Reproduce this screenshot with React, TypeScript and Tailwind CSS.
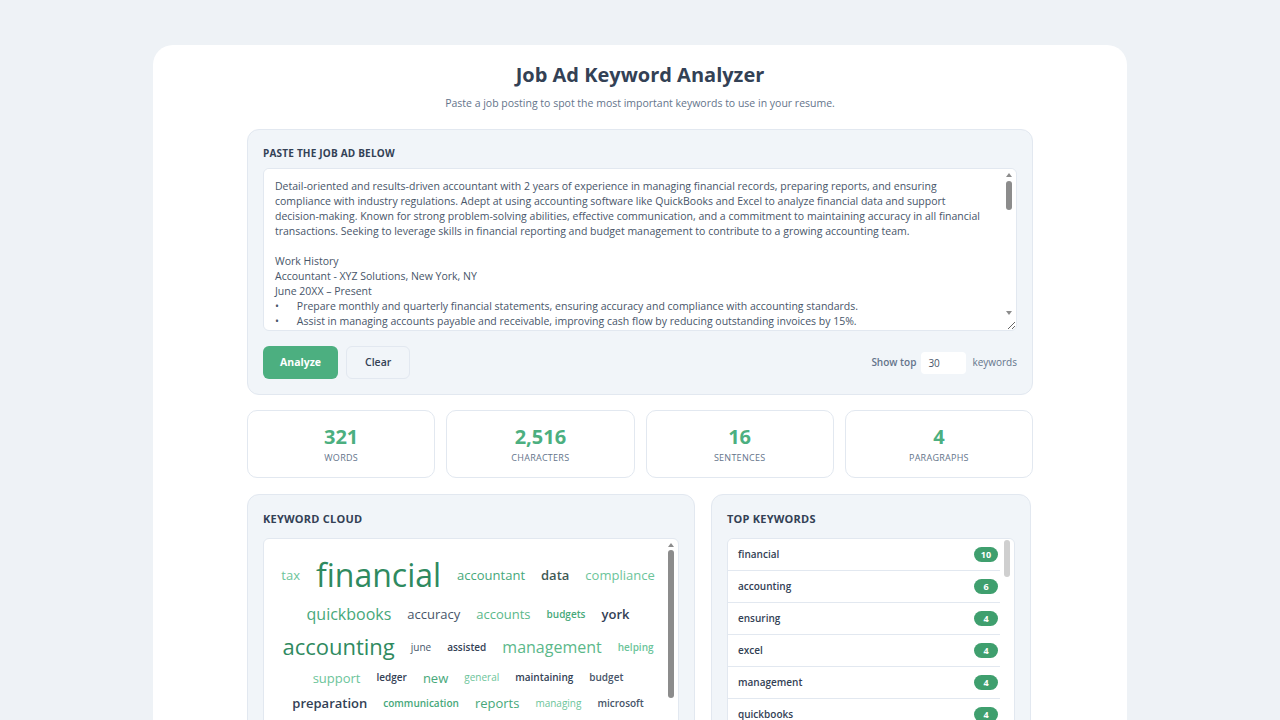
import { useState } from "react";

const SAMPLE = `Detail-oriented and results-driven accountant with 2 years of experience in managing financial records, preparing reports, and ensuring compliance with industry regulations. Adept at using accounting software like QuickBooks and Excel to analyze financial data and support decision-making. Known for strong problem-solving abilities, effective communication, and a commitment to maintaining accuracy in all financial transactions. Seeking to leverage skills in financial reporting and budget management to contribute to a growing accounting team.

Work History
Accountant - XYZ Solutions, New York, NY
June 20XX – Present
•\tPrepare monthly and quarterly financial statements, ensuring accuracy and compliance with accounting standards.
•\tAssist in managing accounts payable and receivable, improving cash flow by reducing outstanding invoices by 15%.
•\tReconcile bank statements and general ledger accounts on a monthly basis.
•\tSupport budget preparation and variance analysis for department heads.`;

type Word = { text: string; cls: string };

// size / weight / tint for every cloud entry
const cloud: Word[] = [
  { text: "tax", cls: "text-[13px] text-[#6cc49a]" },
  { text: "financial", cls: "text-[32px] text-[#2f8a60]" },
  { text: "accountant", cls: "text-[13px] text-[#47a87a]" },
  { text: "data", cls: "text-[13px] font-semibold text-[#3f5a55]" },
  { text: "compliance", cls: "text-[13px] text-[#6cc49a]" },
  { text: "quickbooks", cls: "text-[16px] text-[#47a87a]" },
  { text: "accuracy", cls: "text-[13px] text-[#475569]" },
  { text: "accounts", cls: "text-[13px] text-[#5bb88a]" },
  { text: "budgets", cls: "text-[10px] font-semibold text-[#47a87a]" },
  { text: "york", cls: "text-[13px] font-semibold text-[#334155]" },
  { text: "accounting", cls: "text-[22px] text-[#2f8a60]" },
  { text: "june", cls: "text-[10px] text-[#475569]" },
  { text: "assisted", cls: "text-[10px] font-semibold text-[#334155]" },
  { text: "management", cls: "text-[16px] text-[#5bb88a]" },
  { text: "helping", cls: "text-[10px] font-semibold text-[#6cc49a]" },
  { text: "support", cls: "text-[13px] text-[#6cc49a]" },
  { text: "ledger", cls: "text-[10px] font-semibold text-[#334155]" },
  { text: "new", cls: "text-[13px] text-[#47a87a]" },
  { text: "general", cls: "text-[10px] text-[#6cc49a]" },
  { text: "maintaining", cls: "text-[10px] font-semibold text-[#334155]" },
  { text: "budget", cls: "text-[10px] font-semibold text-[#475569]" },
  { text: "preparation", cls: "text-[13px] font-semibold text-[#334155]" },
  { text: "communication", cls: "text-[10px] font-semibold text-[#47a87a]" },
  { text: "reports", cls: "text-[13px] text-[#47a87a]" },
  { text: "managing", cls: "text-[10px] text-[#6cc49a]" },
  { text: "microsoft", cls: "text-[10px] font-semibold text-[#475569]" },
  { text: "statements", cls: "text-[13px] text-[#47a87a]" },
  { text: "excel", cls: "text-[16px] text-[#2f8a60]" },
  { text: "ensuring", cls: "text-[16px] text-[#47a87a]" },
  { text: "reconciliation", cls: "text-[10px] font-semibold text-[#334155]" },
];

const topKeywords: [string, number][] = [
  ["financial", 10],
  ["accounting", 6],
  ["ensuring", 4],
  ["excel", 4],
  ["management", 4],
  ["quickbooks", 4],
  ["accountant", 3],
  ["compliance", 3],
  ["data", 3],
  ["tax", 3],
  ["accuracy", 2],
  ["accounts", 2],
  ["budgets", 2],
  ["york", 2],
  ["june", 2],
  ["assisted", 2],
  ["helping", 2],
  ["support", 2],
  ["ledger", 2],
  ["new", 2],
  ["general", 2],
  ["maintaining", 2],
  ["budget", 2],
  ["preparation", 2],
  ["communication", 1],
  ["reports", 1],
  ["managing", 1],
  ["microsoft", 1],
  ["statements", 1],
  ["reconciliation", 1],
];

const stats = [
  { value: "321", label: "Words" },
  { value: "2,516", label: "Characters" },
  { value: "16", label: "Sentences" },
  { value: "4", label: "Paragraphs" },
];

// thin scroll indicator laid over the right edge of a scrolling box
function ScrollIndicator({ top, height, thumb, arrows }: { top: string; height: string; thumb: string; arrows?: boolean }) {
  return (
    <div className="pointer-events-none absolute top-[1px] right-[1px] bottom-[1px] w-[14px]">
      {arrows && (
        <span className="absolute top-[4px] left-[4px] h-0 w-0 border-x-[3px] border-b-[4px] border-x-transparent border-b-[#8c8c8c]" />
      )}
      <div className={`absolute left-[4px] w-[6px] rounded-full ${top} ${height} ${thumb}`} />
      {arrows && (
        <span className="absolute bottom-[15px] left-[4px] h-0 w-0 border-x-[3px] border-t-[4px] border-x-transparent border-t-[#8c8c8c]" />
      )}
    </div>
  );
}

export default function App() {
  const [text, setText] = useState<string>(SAMPLE);
  const [limit, setLimit] = useState<string>("30");

  return (
    <div className="h-screen overflow-hidden bg-[#eef2f6] pt-[45px] font-['Segoe_UI','Open_Sans',sans-serif]">
      <main className="mx-auto w-[974px] rounded-[20px] bg-white px-[94px] pt-[15px] pb-10">
        <h1 className="text-center text-[20px] font-bold leading-[30px] text-[#334155]">Job Ad Keyword Analyzer</h1>
        <p className="mt-[5px] text-center text-[10.5px] leading-[16px] text-[#64748b]">
          Paste a job posting to spot the most important keywords to use in your resume.
        </p>

        <section className="mt-[18px] rounded-[12px] border border-[#e2e8f0] bg-[#f1f5f9] px-[15px] pt-[16px] pb-[15px]">
          <h2 className="text-[10px] font-bold uppercase leading-[14px] tracking-[0.02em] text-[#334155]">Paste the job ad below</h2>
          <div className="relative mt-[8px]">
            <textarea
              value={text}
              onChange={(e) => setText(e.target.value)}
              className="block h-[163px] w-full resize-y rounded-[6px] border border-[#e2e8f0] bg-white py-[10px] pr-[26px] pl-[11px] text-[10.5px] leading-[15px] text-[#475569] outline-none [tab-size:8]"
            />
            <ScrollIndicator top="top-[12px]" height="h-[29px]" thumb="bg-[#8c8c8c]" arrows />
          </div>
          <div className="mt-[15px] flex items-center">
            <button className="h-[33px] rounded-[6px] bg-[#4caf80] px-[17px] text-[10.5px] font-bold text-white">Analyze</button>
            <button className="ml-[8px] h-[33px] rounded-[6px] border border-[#e2e8f0] bg-[#f1f5f9] px-[18px] text-[10.5px] font-semibold text-[#334155]">Clear</button>
            <div className="ml-auto flex items-center text-[10px]">
              <span className="font-semibold text-[#64748b]">Show top</span>
              <input
                value={limit}
                onChange={(e) => setLimit(e.target.value)}
                className="ml-[5px] h-[22px] w-[45px] rounded-[4px] bg-white px-[7px] text-[10px] text-[#475569] outline-none"
              />
              <span className="ml-[6px] text-[#64748b]">keywords</span>
            </div>
          </div>
        </section>

        <section className="mt-[15px] grid grid-cols-4 gap-[11px]">
          {stats.map((s) => (
            <div key={s.label} className="flex h-[68px] flex-col items-center justify-center rounded-[10px] border border-[#e2e8f0] bg-white">
              <div className="text-[20px] font-bold leading-[24px] text-[#4caf80]">{s.value}</div>
              <div className="mt-[3px] text-[9px] uppercase leading-[12px] tracking-[0.03em] text-[#64748b]">{s.label}</div>
            </div>
          ))}
        </section>

        <section className="mt-[16px] flex gap-[16px]">
          <div className="w-[448px] rounded-[12px] border border-[#e2e8f0] bg-[#f1f5f9] px-[15px] pt-[17px] pb-[15px]">
            <h2 className="text-[11px] font-bold uppercase leading-[14px] tracking-[0.02em] text-[#334155]">Keyword cloud</h2>
            <div className="relative mt-[12px]">
              <div className="h-[240px] overflow-y-auto rounded-[6px] border border-[#e2e8f0] bg-white py-[16px] pr-[18px] pl-[12px]">
                <div className="flex flex-wrap items-center justify-center gap-x-[16px] gap-y-[9px]">
                  {cloud.map((w) => (
                    <span key={w.text} className={`leading-[1.25] ${w.cls}`}>{w.text}</span>
                  ))}
                </div>
              </div>
              <ScrollIndicator top="top-[11px]" height="h-[148px]" thumb="bg-[#8c8c8c]" arrows />
            </div>
          </div>

          <div className="w-[320px] rounded-[12px] border border-[#e2e8f0] bg-[#f1f5f9] px-[15px] pt-[17px] pb-[15px]">
            <h2 className="text-[11px] font-bold uppercase leading-[14px] tracking-[0.02em] text-[#334155]">Top keywords</h2>
            <div className="relative mt-[12px]">
              <ul className="h-[240px] overflow-y-auto rounded-[6px] border border-[#e2e8f0] bg-white pr-[14px]">
                {topKeywords.map(([word, count]) => (
                  <li key={word} className="flex h-[32px] items-center justify-between border-b border-[#e2e8f0] pr-[2px] pl-[10px]">
                    <span className="text-[10px] font-semibold text-[#334155]">{word}</span>
                    <span className="flex h-[15px] min-w-[24px] items-center justify-center rounded-full bg-[#3f9f6e] px-[6px] text-[9px] font-bold text-white">{count}</span>
                  </li>
                ))}
              </ul>
              <ScrollIndicator top="top-[1px]" height="h-[37px]" thumb="bg-[#cfcfcf]" />
            </div>
          </div>
        </section>
      </main>
    </div>
  );
}
